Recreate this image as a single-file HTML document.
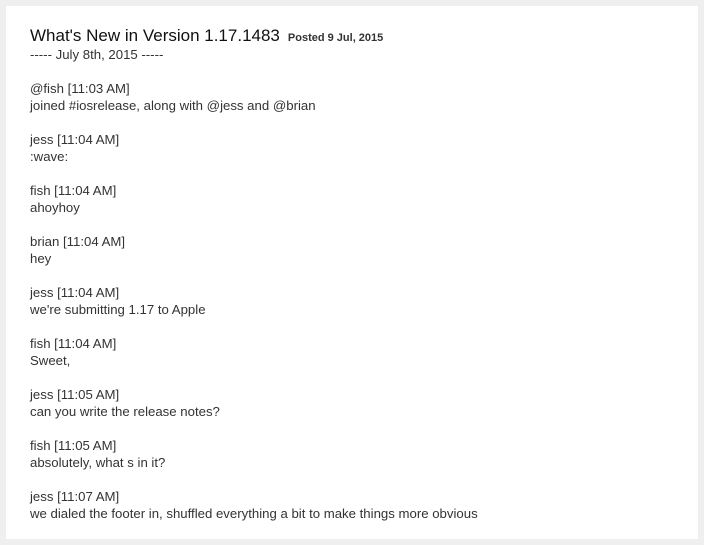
<!DOCTYPE html>
<html><head><style>
body{margin:0;background:#efefef;width:704px;height:545px;overflow:hidden;font-family:"Liberation Sans",sans-serif;color:#222}
.p{position:absolute;left:6px;top:6px;width:692px;height:533px;background:#fff}
.t{position:absolute;left:30px;top:26px;font-size:17px;color:#111;white-space:nowrap}
.t small{font-size:11px;margin-left:8px;font-weight:bold;color:#333}
.c{position:absolute;left:30px;top:46px;font-size:13.2px;line-height:17px;white-space:nowrap;color:#333}
.c p{margin:0 0 17px}
</style></head><body>
<div class="p"></div>
<div class="t">What's New in Version 1.17.1483<small>Posted 9 Jul, 2015</small></div>
<div class="c">
<p>----- July 8th, 2015 -----</p>
<p>@fish [11:03 AM]<br>joined #iosrelease, along with @jess and @brian</p>
<p>jess [11:04 AM]<br>:wave:</p>
<p>fish [11:04 AM]<br>ahoyhoy</p>
<p>brian [11:04 AM]<br>hey</p>
<p>jess [11:04 AM]<br>we're submitting 1.17 to Apple</p>
<p>fish [11:04 AM]<br>Sweet,</p>
<p>jess [11:05 AM]<br>can you write the release notes?</p>
<p>fish [11:05 AM]<br>absolutely, what s in it?</p>
<p>jess [11:07 AM]<br>we dialed the footer in, shuffled everything a bit to make things more obvious</p>
</div>
</body></html>
